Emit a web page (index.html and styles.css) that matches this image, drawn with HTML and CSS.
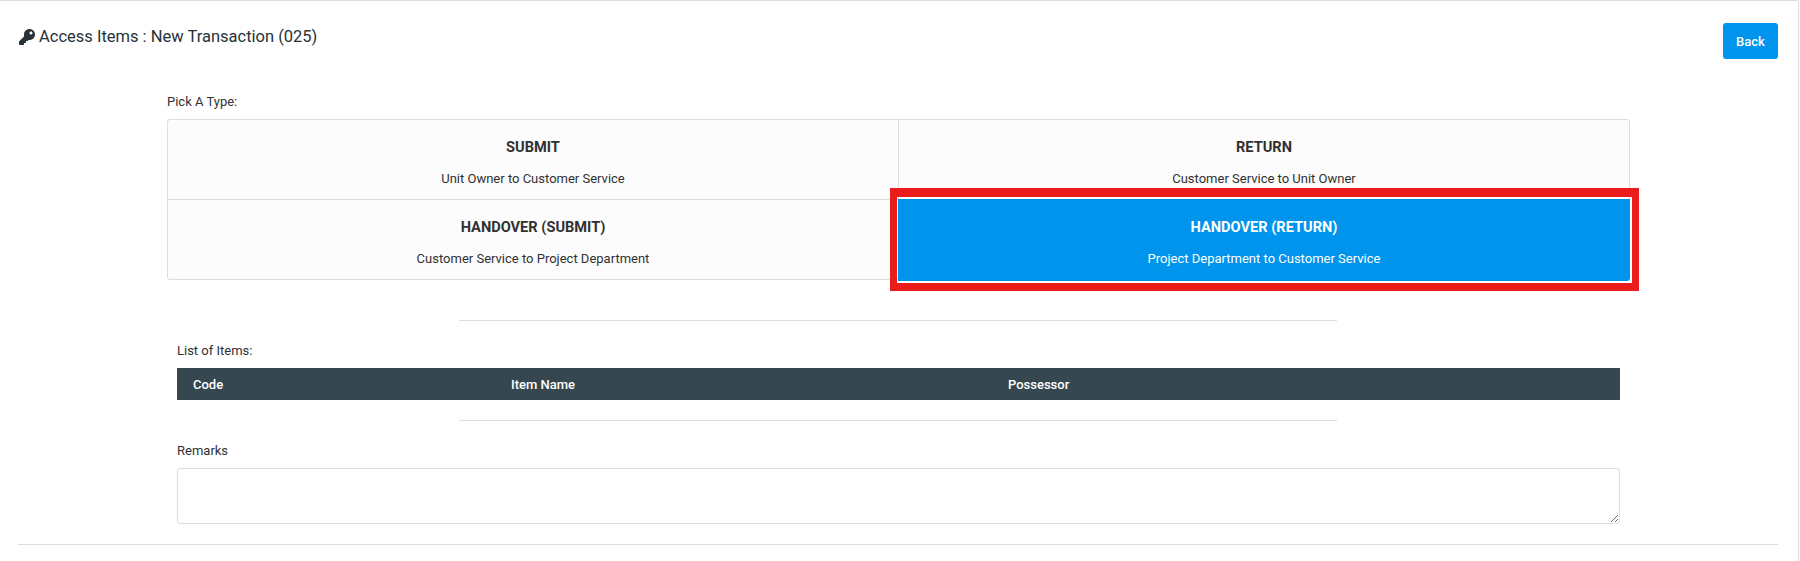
FILE: index.html
```html
<!DOCTYPE html>
<html lang="en">
  <head>
    <meta charset="UTF-8" />
    <title>Access Items : New Transaction (025)</title>
    <link rel="stylesheet" href="styles.css">
  </head>
  <body>
    <div class="card">
      <!-- Header -->
      <div class="header">
        <h1 class="title">
          <svg class="key-icon" viewBox="0 0 512 512"><path d="M512 176.001C512 273.203 433.202 352 336 352c-11.22 0-22.19-1.062-32.827-3.069l-24.012 27.014A23.999 23.999 0 0 1 261.223 384H224v40c0 13.255-10.745 24-24 24h-40v40c0 13.255-10.745 24-24 24H24c-13.255 0-24-10.745-24-24v-78.059c0-6.365 2.529-12.47 7.029-16.971l161.802-161.802C163.108 213.814 160 195.271 160 176 160 78.798 238.797.001 335.999 0 433.488-.001 512 78.511 512 176.001zM336 128c0 26.51 21.49 48 48 48s48-21.49 48-48-21.49-48-48-48-48 21.49-48 48z"/></svg>
          Access Items : New Transaction (025)
        </h1>
        <button class="back-btn">Back</button>
      </div>

      <!-- Transaction type -->
      <div class="type-section">
        <div class="type-label">Pick A Type:</div>
        <div class="type-grid">
          <div class="type-cell">
            <h3>SUBMIT</h3>
            <p>Unit Owner to Customer Service</p>
          </div>
          <div class="type-cell">
            <h3>RETURN</h3>
            <p>Customer Service to Unit Owner</p>
          </div>
          <div class="type-cell">
            <h3>HANDOVER (SUBMIT)</h3>
            <p>Customer Service to Project Department</p>
          </div>
          <div class="type-cell active">
            <h3>HANDOVER (RETURN)</h3>
            <p>Project Department to Customer Service</p>
            <div class="highlight"></div>
          </div>
        </div>
      </div>

      <hr class="divider" />

      <!-- Items -->
      <div class="items">
        <label class="field-label">List of Items:</label>
        <div class="items-head">
          <span class="col-code">Code</span>
          <span class="col-name">Item Name</span>
          <span>Possessor</span>
        </div>
      </div>

      <hr class="divider" />

      <!-- Remarks -->
      <div class="remarks">
        <label class="field-label" for="remarks">Remarks</label>
        <textarea id="remarks"></textarea>
      </div>

      <hr class="footer-line" />
    </div>
  </body>
</html>
```

FILE: styles.css
```css
* {
  box-sizing: border-box;
}
html,
body {
  height: 100%;
}
body {
  margin: 0;
  overflow: hidden;
  font-family: Roboto, "Liberation Sans", sans-serif;
  font-size: 13px;
  color: #313131;
  background-color: #fff;
}
.card {
  width: 1799px;
  height: 561px;
  padding: 22px 20px 0 18px;
  border-top: 1px solid #ddd;
  border-right: 1px solid #ddd;
  border-top-right-radius: 3px;
}
.header {
  display: flex;
  justify-content: space-between;
  align-items: flex-start;
  height: 36px;
}
.title {
  display: flex;
  align-items: center;
  gap: 4px;
  margin: 3px 0 0 1px;
  font-size: 16.5px;
  font-weight: 400;
  line-height: 22px;
  color: #263238;
}
.key-icon {
  width: 16px;
  height: 16px;
  fill: #263238;
}
.back-btn {
  width: 55px;
  height: 36px;
  padding: 0;
  border: none;
  border-radius: 3px;
  background-color: #0094ec;
  color: #fff;
  font-family: inherit;
  font-size: 13px;
  font-weight: 500;
  cursor: pointer;
}
.type-section {
  width: 1463px;
  margin: 36px 0 0 149px;
}
.type-label {
  height: 24px;
  line-height: 13px;
}
.type-grid {
  display: grid;
  grid-template-columns: 731px 730px;
  grid-auto-rows: 80px;
  height: 161px;
  border: 1px solid #ddd;
  border-radius: 3px;
  background-color: #fcfcfc;
}
.type-cell {
  position: relative;
  padding-top: 17px;
  text-align: center;
  border-bottom: 1px solid #ddd;
}
.type-cell:nth-child(odd) {
  border-right: 1px solid #ddd;
}
.type-cell:nth-child(n + 3) {
  border-bottom: none;
}
.type-cell h3 {
  margin: 0;
  font-size: 14.6px;
  font-weight: 700;
  line-height: 20px;
}
.type-cell p {
  margin: 14px 0 0;
  line-height: 15px;
}
.type-cell.active {
  margin: -1px;
  padding-top: 18px;
  background-color: #0094ec;
  color: #fff;
  border-bottom-right-radius: 3px;
}
.highlight {
  position: absolute;
  top: -11px;
  left: -8px;
  right: -9px;
  bottom: -10px;
  border: 8px solid #ea1c1c;
  border-top-width: 9px;
  border-left-width: 7px;
  border-right-width: 7px;
  pointer-events: none;
}
.divider {
  width: 878px;
  height: 1px;
  margin: 40px 0 0 441px;
  border: none;
  background-color: #ddd;
}
.items {
  width: 1443px;
  margin: 22px 0 0 159px;
}
.field-label {
  display: block;
  height: 25px;
  line-height: 15px;
}
.items-head {
  display: flex;
  align-items: center;
  height: 32px;
  padding-left: 16px;
  background-color: #37474f;
  color: #fff;
  font-weight: 500;
}
.col-code {
  width: 318px;
}
.col-name {
  width: 497px;
}
.items + .divider {
  margin-top: 20px;
}
.remarks {
  width: 1443px;
  margin: 22px 0 0 159px;
}
.remarks textarea {
  display: block;
  width: 100%;
  height: 56px;
  padding: 8px;
  border: 1px solid #ddd;
  border-radius: 3px;
  font-family: inherit;
  font-size: 13px;
}
.footer-line {
  height: 1px;
  margin: 20px 0 0 0;
  border: none;
  background-color: #ddd;
}
```
